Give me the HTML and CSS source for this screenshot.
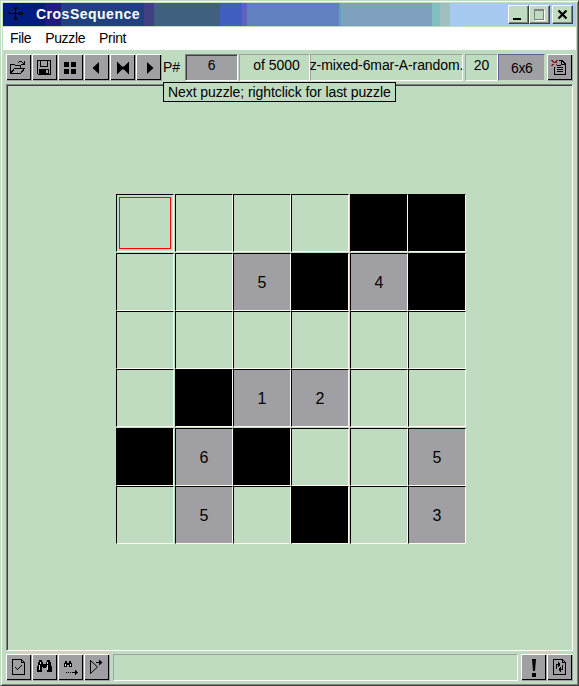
FILE: index.html
```html
<!DOCTYPE html>
<html lang="en">
<head>
<meta charset="utf-8">
<title>CrosSequence</title>
<link rel="stylesheet" href="styles.css">
</head>
<body>
<div class="window">
  <header class="titlebar">
    <svg class="logo" width="16" height="16" shape-rendering="crispEdges" fill="none" stroke="#000"><path d="M0 5.500h2M1 6.500h4M11 5.500h3v2h-3zM5 6.500h6M7.500 3v8M6 0.500h1M8 0.500h1M6 1.500h3M7 2.500h1M6.500 10.500h2v2h-2z"/></svg>
    <span class="title">CrosSequence</span>
    <div class="controls">
      <button class="ctl"><svg width="19" height="17" shape-rendering="crispEdges"><path d="M4 12h8v2H4z"/></svg></button>
      <button class="ctl"><svg width="19" height="17" shape-rendering="crispEdges"><path d="M4 3h10v11H4zM5 5v8h8V5z" fill="#808080" fill-rule="evenodd"/><path d="M14 4h1v11H5v-1h9z" fill="#fff"/></svg></button>
      <button class="ctl close"><svg width="19" height="17"><path d="M5.500 4.500l8 8M13.500 4.500l-8 8" stroke="#000" stroke-width="2.200"/></svg></button>
    </div>
  </header>
  <nav class="menu"><span>File</span><span>Puzzle</span><span>Print</span></nav>
  <div class="toolbar">
    <button class="btn"><svg width="24" height="24" shape-rendering="crispEdges" fill="none" stroke="#000"><path d="M3.500 17.500v-9h4l1 1h5v3M3.500 17.500h10l4-5h-10l-4 5M11 6.500h1M12 5.500h3M15 6.500h1M16 7.500h1M17.500 5v4M14 8.500h3"/></svg></button>
    <button class="btn"><svg width="24" height="24" shape-rendering="crispEdges"><path d="M4 4h14v15H5l-1-1zM5 5v13h1v-5h10v5h1V5h-2v6H7V5zM8 5v5h6V5z" fill-rule="evenodd"/><path d="M13 14h2v3h-2z" fill="#a09fa3"/></svg></button>
    <button class="btn"><svg width="24" height="24" shape-rendering="crispEdges"><path d="M5 6h5v5H5zM12 6h5v5h-5zM5 13h5v5H5zM12 13h5v5h-5z"/></svg></button>
    <button class="btn"><svg width="24" height="24"><path d="M7.500 12L14 6v12z"/></svg></button>
    <button class="btn"><svg width="24" height="24"><path d="M6 5.500l5 5h2l5-5v13l-5-5h-2l-5 5z"/></svg></button>
    <button class="btn"><svg width="24" height="24"><path d="M16.500 12L10 6v12z"/></svg></button>
    <span class="label">P#</span>
    <span class="field number">6</span>
    <span class="field total">of 5000</span>
    <span class="field name">z-mixed-6mar-A-random.</span>
    <span class="field level">20</span>
    <span class="size">6x6</span>
    <button class="btn"><svg width="24" height="24" shape-rendering="crispEdges" fill="none" stroke="#000"><path d="M6.500 11v7.500h11V8l-3.500-3.500h-3M13.500 5v3.500h4M9 9.500h4M9 11.500h6M9 13.500h6M9 15.500h6"/><path d="M3 4.500h2M4 5.500h2M5 6.500h4M4 8.500h2M7 5.500h2M8 4.500h2M3 9.500h2M8 8.500h1" stroke="#802020"/></svg></button>
  </div>
  <main class="panel">
    <div class="board">
      <i class="cell cursor"></i><i class="cell"></i><i class="cell"></i><i class="cell"></i><i class="cell block"></i><i class="cell block"></i>
      <i class="cell"></i><i class="cell"></i><i class="cell given">5</i><i class="cell block"></i><i class="cell given">4</i><i class="cell block"></i>
      <i class="cell"></i><i class="cell"></i><i class="cell"></i><i class="cell"></i><i class="cell"></i><i class="cell"></i>
      <i class="cell"></i><i class="cell block"></i><i class="cell given">1</i><i class="cell given">2</i><i class="cell"></i><i class="cell"></i>
      <i class="cell block"></i><i class="cell given">6</i><i class="cell block"></i><i class="cell"></i><i class="cell"></i><i class="cell given">5</i>
      <i class="cell"></i><i class="cell given">5</i><i class="cell"></i><i class="cell block"></i><i class="cell"></i><i class="cell given">3</i>
    </div>
  </main>
  <footer class="statusbar">
    <button class="btn"><svg width="24" height="24" shape-rendering="crispEdges" fill="none" stroke="#000"><path d="M5.500 3.500h9l3 3v12h-12zM14.500 4v2.500h3M8 11.500h1M9 12.500h1M10 13.500h1M11 12.500h1M12 11.500h1M13 10.500h1M14 9.500h1"/></svg></button>
    <button class="btn"><svg width="24" height="24" shape-rendering="crispEdges"><path d="M6 4h3v2h1v2h3V6h1V4h3v2h1v4h1v6h-5v-5h-1v1h-3v-1H9v5H4v-6h1V6h1z"/><path d="M7 6h1v2H7zM6 9h1v5H6zM14 6h1v2h-1zM14 9h1v5h-1z" fill="#d8d8d8"/></svg></button>
    <button class="btn"><svg width="24" height="24" shape-rendering="crispEdges"><path d="M6 5h2v2h2V5h2v2h1v4h-3V9H8v2H5V7h1zM7 16h1v1H7zM9 16h1v1H9zM11 16h1v1h-1zM13 16h5v1h-5zM16 14h1v5h-1zM17 15h1v3h-1zM18 16h1v1h-1z"/><path d="M6 8h1v2H6zM11 8h1v2h-1z" fill="#d8d8d8"/></svg></button>
    <button class="btn"><svg width="24" height="24" fill="none" stroke="#000"><path d="M5.500 4.500v13l7-6.500zM11 6.500h5"/><path d="M14 3.500v6l3.500-3z" fill="#000" stroke="none"/></svg></button>
    <span class="status"></span>
    <button class="btn"><svg width="24" height="24"><path d="M10 3h4l-1 12h-2zM10 17h4v4h-4z"/></svg></button>
    <button class="btn"><svg width="24" height="24" shape-rendering="crispEdges" fill="none" stroke="#000"><path d="M5.500 3.500h9l3 3v12h-12zM14.500 4v2.500h3M8.500 13V8.500H12M10.500 6v5M11.500 7v3M14.500 9v4.500H11M12.500 11v5M11.500 12v3"/></svg></button>
  </footer>
  <div class="tooltip">Next puzzle; rightclick for last puzzle</div>
</div>
</body>
</html>
```
FILE: styles.css
```css
*, *::before { box-sizing: border-box; }
body { margin: 0; background: #c0dcc0; font: 14px "Liberation Sans", Arial, sans-serif; color: #000; }
button { font: inherit; padding: 0; border-radius: 0; }
svg { display: block; }
.window { position: relative; display: flex; flex-direction: column; width: 579px; height: 686px; padding: 1px; border: 1px solid; border-color: #c0dcc0 #404040 #404040 #c0dcc0; box-shadow: inset 1px 1px #fff, inset -1px -1px #808080; }
.titlebar { display: flex; align-items: center; height: 23px; margin: 1px 1px 0; padding: 0 3px 0 5px; color: #fff; background: linear-gradient(90deg, #001c80 42px, #201c80 42px 58px, #204080 58px 141px, #404080 141px 151px, #406080 151px 217px, #4060c0 217px 239px, #6060c0 239px 244px, #6080c0 244px 336px, #60a0c0 336px 338px, #80a0c0 338px 429px, #80c0c0 429px 437px, #a0c0c0 437px 447px, #a6caf0 447px); }
.logo { margin-right: 12px; }
.title { font-weight: bold; font-size: 14px; letter-spacing: .5px; white-space: nowrap; margin-top: -1px; }
.controls { display: flex; margin-left: auto; }
.ctl { width: 21px; height: 19px; background: #c0dcc0; border: 1px solid; border-color: #fff #404040 #404040 #fff; box-shadow: inset -1px -1px #808080; }
.close { margin-left: 2px; }
.menu { display: flex; height: 23px; margin: 1px 1px 0; padding: 2px 0 0 7px; background: #fff; gap: 14px; line-height: 18px; letter-spacing: -.35px; }
.toolbar { display: flex; height: 27px; margin: 4px 4px 0 4px; }
.btn { flex: none; width: 26px; height: 27px; background: #a09fa3; border: 1px solid; border-color: #fff #a09fa3 #a09fa3 #fff; box-shadow: inset -1px -1px #000; }
.label { width: 23px; padding-left: 1px; line-height: 26px; }
.field { height: 27px; border: 1px solid; border-color: #a0a0a4 #fff #fff #a0a0a4; line-height: 21px; white-space: nowrap; text-align: center; }
.number { width: 54px; background: #a0a0a4; border-color: #808080 #fff #fff #808080; box-shadow: inset 1px 1px #404040; }
.total { width: 71px; margin-left: 1px; padding-left: 4px; }
.name { width: 153px; margin-left: 0; text-align: left; text-indent: -1px; letter-spacing: -.09px; }
.level { width: 34px; margin-left: 2px; }
.size { width: 47px; margin-right: 2px; background: #a0a0a4; border: 1px solid; border-color: #606090 #c0dcc0 #c0dcc0 #606090; text-align: center; line-height: 26px; letter-spacing: -.4px; }
.toolbar .btn:last-child { margin-left: auto; }
.panel { flex: 1; margin: 3px 4px 3px; padding: 109px 0 0 109px; border: 1px solid; border-color: #808080 #fff #fff #808080; box-shadow: inset 1px 1px #404040; }
.board { display: grid; grid-template-columns: 59px 58px 58px 59px 58px 58px; grid-template-rows: 59px 58px 58px 59px 58px 58px; }
.cell { width: 58px; height: 58px; border: 1px solid; border-color: #000 #fffbf0 #fffbf0 #000; font: 16px/58px "Liberation Sans", Arial, sans-serif; text-align: center; }
.block { background: #000; }
.given { background: #a0a0a4; }
.cursor { padding: 2px; }
.cursor::before { content: ""; display: block; height: 52px; width: 52px; border: 1px solid #f00; }
.statusbar { display: flex; height: 27px; margin: 0 4px 3px 4px; }
.status { flex: 1; margin: 0 3px 0 3px; border: 1px solid; border-color: #a0a0a4 #fff #fff #a0a0a4; }
.tooltip { position: absolute; left: 162px; top: 81px; width: 233px; height: 20px; padding-left: 4px; background: #c0dcc0; border: 1px solid #000; line-height: 18px; white-space: nowrap; letter-spacing: -.075px; }
```
